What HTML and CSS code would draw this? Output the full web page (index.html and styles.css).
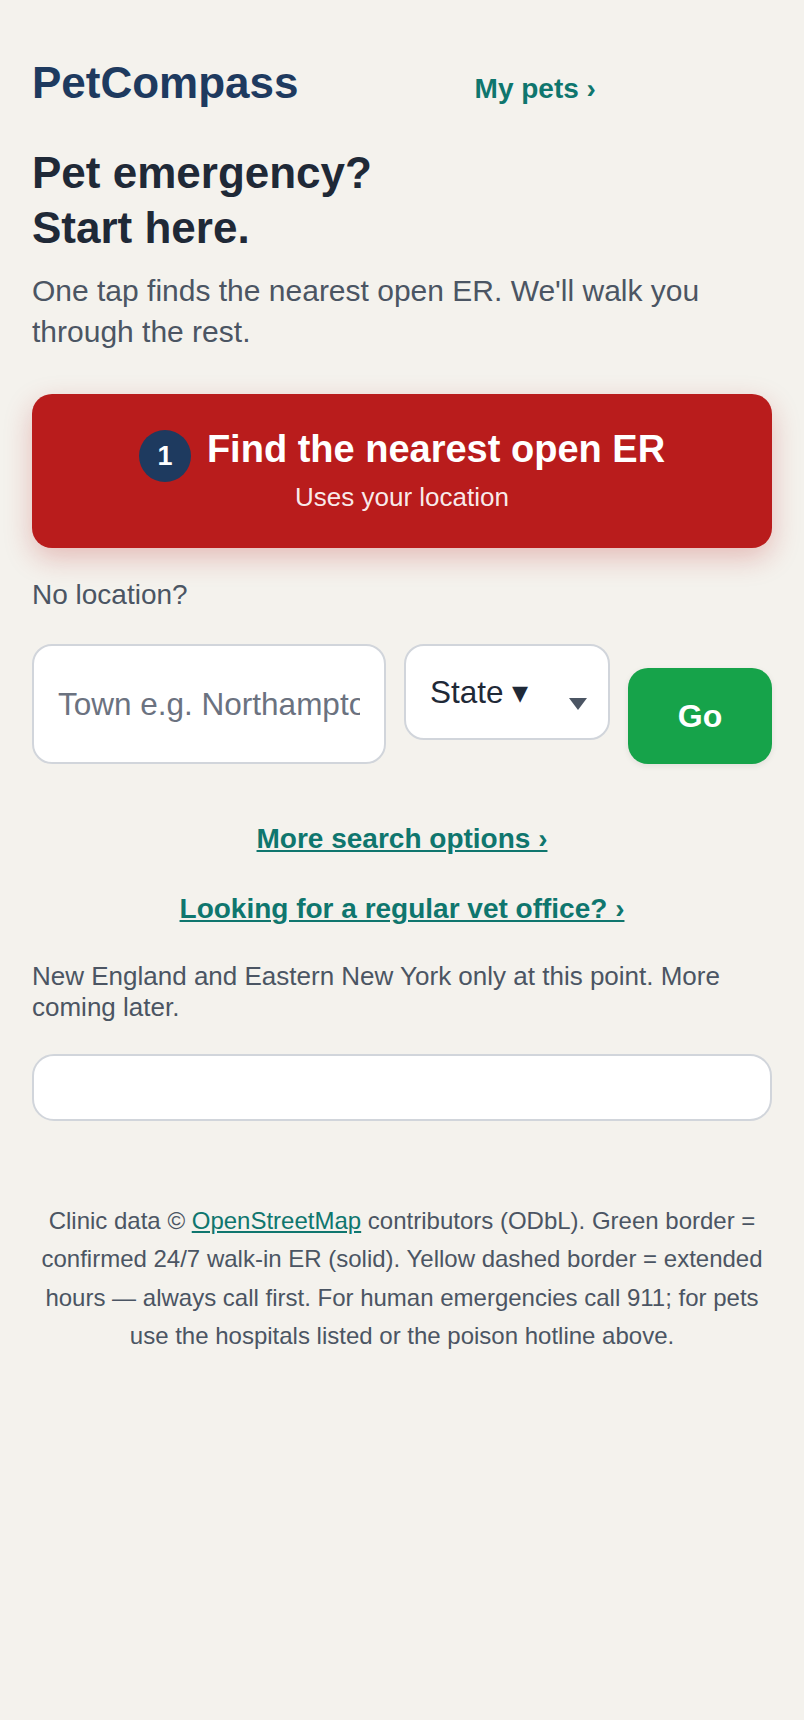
FILE: index.html
```html
<!DOCTYPE html>
<html lang="en">
<head>
  <meta charset="UTF-8">
  <meta name="viewport" content="width=device-width, initial-scale=1.0">
  <title>PetCompass - Pet emergency</title>
  <link rel="stylesheet" href="styles.css">
</head>
<body>
  <div class="page">
    <header class="site-header">
      <div class="logo">PetCompass</div>
      <a class="nav-pets" href="#">My pets ›</a>
    </header>

    <main>
      <h1 class="hero-title">Pet emergency?<br>Start here.</h1>
      <p class="hero-sub">One tap finds the nearest open ER. We'll walk you through the rest.</p>

      <button class="er-button" type="button">
        <span class="er-row">
          <span class="step">1</span>
          <span class="er-title">Find the nearest open ER</span>
        </span>
        <span class="er-sub">Uses your location</span>
      </button>

      <p class="no-loc">No location?</p>
      <form class="search-row" onsubmit="return false;">
        <input class="town-input" type="text" placeholder="Town e.g. Northampton">
        <div class="state-wrap">
          <select class="state-select">
            <option>State ▾</option>
            <option>CT</option>
            <option>MA</option>
            <option>ME</option>
            <option>NH</option>
            <option>NY</option>
            <option>RI</option>
            <option>VT</option>
          </select>
        </div>
        <button class="go-btn" type="submit">Go</button>
      </form>

      <p class="center-link"><a href="#">More search options ›</a></p>
      <p class="center-link"><a href="#">Looking for a regular vet office? ›</a></p>

      <p class="coverage">New England and Eastern New York only at this point. More coming later.</p>
      <div class="result-box"></div>
    </main>

    <footer class="site-footer">
      <p>Clinic data © <a href="#">OpenStreetMap</a> contributors (ODbL). Green border = confirmed 24/7 walk-in ER (solid). Yellow dashed border = extended hours — always call first. For human emergencies call 911; for pets use the hospitals listed or the poison hotline above.</p>
    </footer>
  </div>
</body>
</html>
```

FILE: styles.css
```css
* {
  margin: 0;
  padding: 0;
  box-sizing: border-box;
}

body {
  font-family: 'Liberation Sans', Arial, sans-serif;
  background: #f4f2ed;
  color: #1f2937;
}

.page {
  padding: 57px 32px 80px;
}

/* header */
.site-header {
  display: flex;
  justify-content: space-between;
  align-items: baseline;
}

.site-header::after {
  content: "";
}

.logo {
  font-size: 44px;
  font-weight: 700;
  line-height: 1.2;
  color: #1e3a5f;
}

.nav-pets {
  font-size: 28px;
  font-weight: 700;
  line-height: 1.2;
  color: #0f766e;
  text-decoration: none;
}

/* hero */
.hero-title {
  margin-top: 35px;
  font-size: 44px;
  line-height: 1.25;
  font-weight: 700;
  color: #1f2937;
}

.hero-sub {
  margin-top: 16px;
  font-size: 30px;
  line-height: 40.7px;
  color: #4b5563;
}

/* big red button */
.er-button {
  display: flex;
  flex-direction: column;
  align-items: center;
  width: 100%;
  margin-top: 42px;
  padding: 36px 24px 35px;
  border: none;
  border-radius: 20px;
  background: #b91c1c;
  color: #fff;
  font-family: inherit;
  cursor: pointer;
  box-shadow: 0 10px 28px rgba(185, 28, 28, 0.25);
}

.er-row {
  display: flex;
  align-items: flex-start;
  gap: 16px;
}

.step {
  display: flex;
  align-items: center;
  justify-content: center;
  width: 52px;
  height: 52px;
  border-radius: 50%;
  background: #1e3a5f;
  font-size: 27px;
  font-weight: 700;
  line-height: 1;
}

.er-title {
  font-size: 38px;
  font-weight: 700;
  line-height: 1;
}

.er-sub {
  font-size: 26px;
  line-height: 1.2;
  color: rgba(255, 255, 255, 0.92);
}

/* manual search */
.no-loc {
  margin-top: 26px;
  font-size: 28px;
  line-height: 1.5;
  color: #4b5563;
}

.search-row {
  display: flex;
  gap: 18px;
  margin-top: 28px;
}

.town-input {
  flex: 1;
  min-width: 0;
  height: 120px;
  padding: 0 24px;
  border: 2px solid #d1d5db;
  border-radius: 20px;
  background: #fff;
  font-family: inherit;
  font-size: 31.5px;
  color: #1f2937;
}

.town-input::placeholder {
  color: #6b7280;
}

.state-wrap {
  position: relative;
  width: 206px;
}

.state-wrap::after {
  content: "";
  position: absolute;
  right: 23px;
  top: 50%;
  margin-top: -6px;
  border-left: 9.5px solid transparent;
  border-right: 9.5px solid transparent;
  border-top: 12px solid #4b5563;
  pointer-events: none;
}

.state-select {
  appearance: none;
  -webkit-appearance: none;
  width: 100%;
  height: 96px;
  padding: 0 60px 0 24px;
  border: 2px solid #d1d5db;
  border-radius: 20px;
  background: #fff;
  font-family: inherit;
  font-size: 31.5px;
  color: #1f2937;
}

.go-btn {
  align-self: flex-end;
  width: 144px;
  height: 96px;
  border: none;
  border-radius: 20px;
  background: #16a34a;
  color: #fff;
  font-family: inherit;
  font-size: 32px;
  font-weight: 700;
  cursor: pointer;
  box-shadow: 0 2px 6px rgba(0, 0, 0, 0.08);
}

/* links */
.center-link {
  text-align: center;
  font-size: 28px;
  line-height: 1.5;
  font-weight: 700;
  margin-top: 28px;
}

.search-row + .center-link {
  margin-top: 54px;
}

.center-link a {
  color: #0f766e;
}

.coverage {
  margin-top: 31px;
  font-size: 26px;
  line-height: 30.3px;
  color: #4b5563;
}

.result-box {
  margin-top: 32px;
  height: 67px;
  border: 2px solid #d1d5db;
  border-radius: 22px;
  background: #fff;
}

/* footer */
.site-footer {
  margin-top: 81px;
  text-align: center;
  font-size: 24px;
  line-height: 38.3px;
  color: #4b5563;
}

.site-footer a {
  color: #0f766e;
}
```
